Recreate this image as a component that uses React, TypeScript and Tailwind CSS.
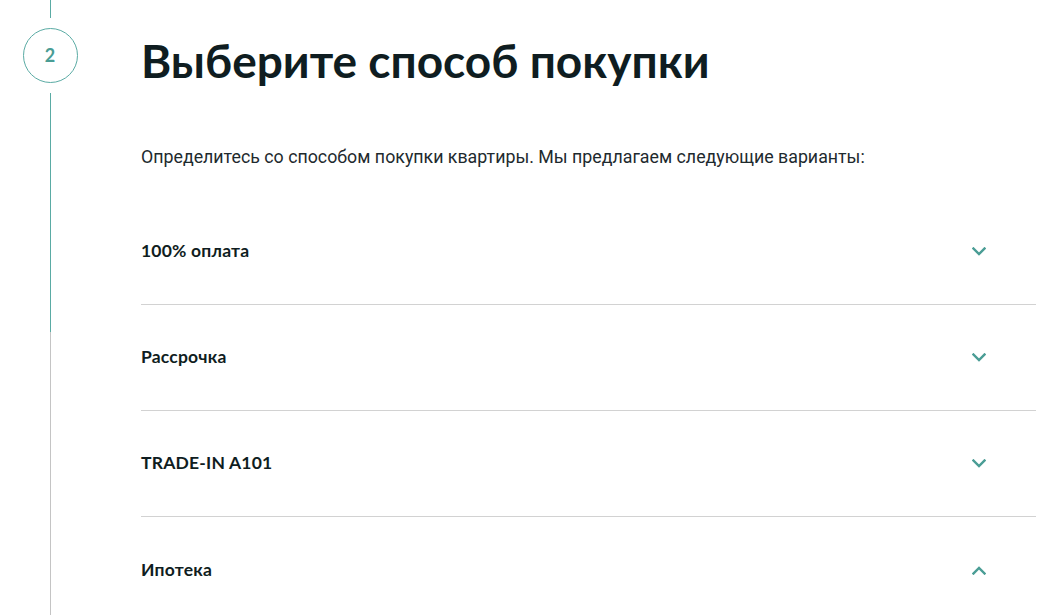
import React, { useState } from 'react';

const options = [
  { title: '100% оплата', open: false },
  { title: 'Рассрочка', open: false },
  { title: 'TRADE-IN A101', open: false },
  { title: 'Ипотека', open: true },
];

const Chevron = ({ up }: { up?: boolean }) => (
  <svg width="14" height="9" viewBox="0 0 14 9" fill="none" className={up ? 'rotate-180' : ''}>
    <path d="M1.5 1.5 7 7l5.5-5.5" stroke="#4a9d95" strokeWidth="2.4" strokeLinecap="square" />
  </svg>
);

export default function App() {
  const [items, setItems] = useState(options);

  const toggle = (i: number) => {
    setItems(prev => prev.map((it, idx) => (idx === i ? { ...it, open: !it.open } : it)));
  };

  return (
    <div className="flex h-[615px] w-[1047px] overflow-hidden bg-white font-['Lato',sans-serif] text-[#0f1d21]">
      {/* timeline */}
      <div className="flex w-[100px] shrink-0 flex-col items-center">
        <div className="h-[18px] w-px bg-[#5aaba4]" />
        <div className="mt-[10px] flex h-[55px] w-[55px] items-center justify-center rounded-full border border-[#5aaba4] text-[18px] font-bold text-[#4a9d95]">
          2
        </div>
        <div className="mt-[10px] h-[239px] w-px bg-[#5aaba4]" />
        <div className="w-px flex-1 bg-[#c4c4c4]" />
      </div>

      <div className="ml-[41px] mr-[11px] flex flex-1 flex-col">
        <h1 className="mt-[32px] text-[46px] font-bold leading-[58px]">Выберите способ покупки</h1>
        <p className="mt-[55px] font-['Roboto',sans-serif] text-[17.8px] leading-[24px] text-[#1e2a2e]">
          Определитесь со способом покупки квартиры. Мы предлагаем следующие варианты:
        </p>
        <div className="mt-[30px]">
          {items.map((it, i) => (
            <button
              key={it.title}
              onClick={() => toggle(i)}
              className={`flex h-[106px] w-full items-center justify-between pr-[50px] text-left ${i < items.length - 1 ? 'border-b border-[#d2d2d2]' : ''}`}
            >
              <span className="text-[17.5px] font-bold tracking-[0.2px]">{it.title}</span>
              <Chevron up={it.open} />
            </button>
          ))}
        </div>
      </div>
    </div>
  );
}
